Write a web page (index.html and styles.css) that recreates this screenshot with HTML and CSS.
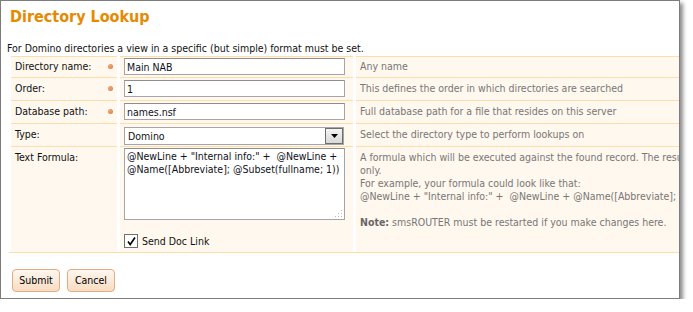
FILE: index.html
```html
<!DOCTYPE html>
<html>
<head>
<meta charset="utf-8">
<title>Directory Lookup</title>
<link rel="stylesheet" href="styles.css">
</head>
<body>
<div class="panel">
  <h1 class="title">Directory Lookup</h1>
  <p class="intro">For Domino directories a view in a specific (but simple) format must be set.</p>
  <div class="form">
    <div class="row row-first">
      <div class="label"><span>Directory name:</span><i class="req"></i></div>
      <div class="field"><input class="text" type="text" value="Main NAB"></div>
      <div class="desc">Any name</div>
    </div>
    <div class="row">
      <div class="label"><span>Order:</span><i class="req"></i></div>
      <div class="field"><input class="text" type="text" value="1"></div>
      <div class="desc">This defines the order in which directories are searched</div>
    </div>
    <div class="row">
      <div class="label"><span>Database path:</span><i class="req"></i></div>
      <div class="field"><input class="text" type="text" value="names.nsf"></div>
      <div class="desc">Full database path for a file that resides on this server</div>
    </div>
    <div class="row">
      <div class="label"><span>Type:</span></div>
      <div class="field">
        <div class="select"><span class="select-value">Domino</span><span class="select-btn"><svg width="7" height="4" viewBox="0 0 7 4"><path d="M0 0h7L3.5 4z" fill="#000"/></svg></span></div>
      </div>
      <div class="desc">Select the directory type to perform lookups on</div>
    </div>
    <div class="row row-tall">
      <div class="label"><span>Text Formula:</span></div>
      <div class="field field-stack">
        <div class="area-wrap">
          <textarea class="area">@NewLine + "Internal info:" +  @NewLine +
@Name([Abbreviate]; @Subset(fullname; 1))</textarea>
          <svg class="grip" width="9" height="9" viewBox="0 0 9 9"><g fill="#b8b8b8"><rect x="7" y="1" width="1" height="1"/><rect x="4" y="4" width="1" height="1"/><rect x="7" y="4" width="1" height="1"/><rect x="1" y="7" width="1" height="1"/><rect x="4" y="7" width="1" height="1"/><rect x="7" y="7" width="1" height="1"/></g></svg>
        </div>
        <label class="check">
          <span class="box"><svg width="11" height="11" viewBox="0 0 11 11"><path d="M2 5.5l2.2 3L9 1.5" fill="none" stroke="#000" stroke-width="1.6"/></svg></span>
          <span>Send Doc Link</span>
        </label>
      </div>
      <div class="desc desc-long">A formula which will be executed against the found record. The result will be added to the message text<br>only.<br>For example, your formula could look like that:<br>@NewLine + "Internal info:" +&nbsp; @NewLine + @Name([Abbreviate]; @Subset(fullname; 1))<br>&nbsp;<br><b>Note:</b> smsROUTER must be restarted if you make changes here.</div>
    </div>
    <div class="rule"></div>
  </div>
  <div class="actions">
    <button class="btn" type="button">Submit</button>
    <button class="btn" type="button">Cancel</button>
  </div>
</div>
</body>
</html>
```
FILE: styles.css
```css
html, body {
  margin: 0;
  padding: 0;
  background: #ffffff;
}
body {
  font-family: "DejaVu Sans Condensed", "DejaVu Sans", sans-serif;
  font-size: 10.5px;
  line-height: 13px;
  color: #111;
}
.panel {
  box-sizing: border-box;
  width: 680px;
  height: 299px;
  border: 1px solid #7d7d7d;
  box-shadow: 3px 3px 4px rgba(0, 0, 0, 0.45);
  overflow: hidden;
  background: #fff;
}
.title {
  margin: 6px 0 0 9px;
  font-size: 16px;
  line-height: 20px;
  font-weight: bold;
  color: #e68a00;
}
.intro {
  margin: 15px 0 0 6px;
}
.form {
  margin: 1px 0 0 10px;
}
.row {
  display: grid;
  grid-template-columns: 106px 233px minmax(0, 1fr);
  column-gap: 3px;
  height: 23px;
}
.row-first {
  height: 21px;
}
.row > div {
  background: #fff8ee;
  border-top: 1px solid #ffdcaa;
  box-sizing: border-box;
}
.row-tall {
  height: 106px;
}
.label {
  display: flex;
  justify-content: space-between;
  padding: 4px 0 0 4px;
}
.row-first .label,
.row-first .desc {
  padding-top: 3px;
}
.req {
  display: block;
  width: 5px;
  height: 5px;
  margin: 4px 4px 0 0;
  border-radius: 50%;
  background: radial-gradient(circle at 40% 35%, #f0a878, #d9773e);
}
.field {
  padding: 2px 0 0 4px;
}
.row-first .field {
  padding-top: 1px;
}
.text {
  box-sizing: border-box;
  display: block;
  width: 221px;
  height: 17px;
  margin: 0;
  padding: 0 2px;
  border: 1px solid #a5a5a5;
  border-top-color: #8e8e8e;
  font: inherit;
  color: #101020;
  background: #fff;
  outline: none;
}
.select {
  box-sizing: border-box;
  display: flex;
  align-items: center;
  justify-content: space-between;
  width: 220px;
  height: 18px;
  margin-top: 1px;
  border: 1px solid #a5a5a5;
  background: #fff;
}
.select-value {
  padding-left: 3px;
  color: #111;
}
.select-btn {
  box-sizing: border-box;
  display: flex;
  align-items: center;
  justify-content: center;
  width: 18px;
  height: 16px;
  border: 1px solid #6e6e6e;
  background: linear-gradient(#f4f4f4, #d8d8d8);
}
.field-stack {
  display: flex;
  flex-direction: column;
  padding-top: 1px;
}
.area-wrap {
  position: relative;
  width: 221px;
  height: 72px;
}
.area {
  box-sizing: border-box;
  display: block;
  width: 221px;
  height: 72px;
  margin: 0;
  padding: 1px 2px;
  border: 1px solid #a5a5a5;
  border-top-color: #8e8e8e;
  font: inherit;
  line-height: 13px;
  color: #101020;
  resize: none;
  overflow: hidden;
  outline: none;
}
.grip {
  position: absolute;
  right: 2px;
  bottom: 2px;
}
.check {
  display: flex;
  align-items: center;
  gap: 4px;
  margin-top: 14px;
}
.box {
  box-sizing: border-box;
  display: flex;
  align-items: center;
  justify-content: center;
  width: 14px;
  height: 14px;
  border: 1px solid #707070;
  background: #fff;
}
.desc {
  padding: 4px 0 0 4px;
  color: #777;
  white-space: nowrap;
  overflow: hidden;
}
.desc b {
  color: #666;
}
.rule {
  height: 1px;
  margin-left: -2px;
  background: #ffdcaa;
}
.actions {
  display: flex;
  gap: 7px;
  margin: 16px 0 0 11px;
}
.btn {
  box-sizing: border-box;
  width: 48px;
  height: 23px;
  margin: 0;
  padding: 0;
  border: 1px solid #e2ad80;
  border-radius: 4px;
  background: linear-gradient(#fff7ef, #f8dcc2);
  font: inherit;
  color: #000;
}
```
